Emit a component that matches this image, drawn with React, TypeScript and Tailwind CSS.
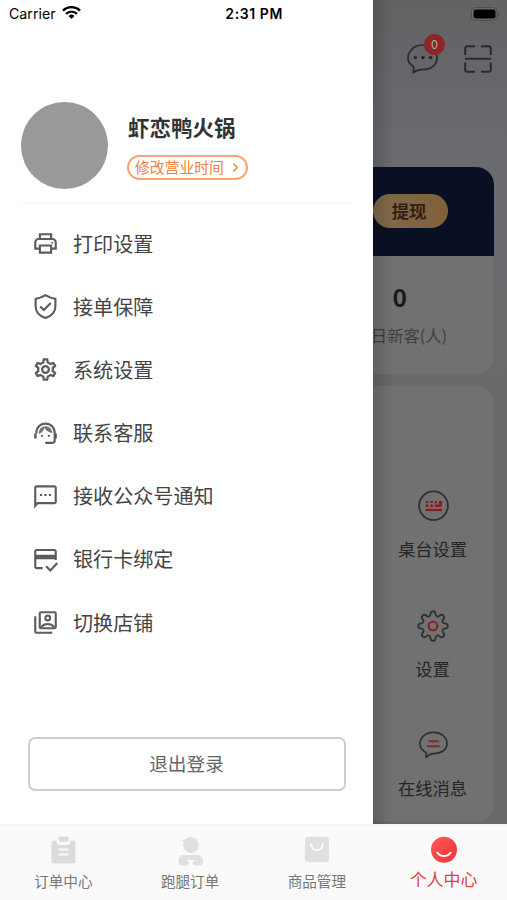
import type { ReactNode } from 'react'

const iconProps = {
  viewBox: '0 0 24 24',
  fill: 'none',
  stroke: 'currentColor',
  strokeWidth: 1.9,
}

function PrintIcon() {
  return (
    <svg {...iconProps} className="size-[27px]">
      <path d="M7 8V3.800h10V8M7 16.500H2.900V11a3 3 0 0 1 3-3h12.200a3 3 0 0 1 3 3v5.500H17" />
      <path d="M7 13.800h10v6.300H7z" />
      <circle cx="18" cy="11.300" r=".9" fill="currentColor" stroke="none" />
    </svg>
  )
}

function ShieldIcon() {
  return (
    <svg {...iconProps} className="size-[27px]">
      <path d="M12 1.900c2.700 1.700 5.500 2.800 8.800 3.300v6.300c0 5.300-3.600 9-8.800 10.700-5.200-1.700-8.800-5.400-8.800-10.700V5.200C6.500 4.700 9.300 3.600 12 1.900z" strokeLinejoin="round" />
      <path d="M7.300 12l3.200 3.100 6.200-6.300" />
    </svg>
  )
}

function GearIcon() {
  return (
    <svg viewBox="0 0 24 24" fill="currentColor" className="size-[27px]">
      <path d="M19.430 12.980c.04-.32.07-.64.07-.98s-.03-.66-.07-.98l2.110-1.650c.19-.15.24-.42.120-.64l-2-3.460c-.09-.16-.26-.25-.44-.25-.06 0-.12.010-.17.030l-2.490 1c-.52-.4-1.080-.73-1.690-.98l-.38-2.650C14.460 2.180 14.250 2 14 2h-4c-.25 0-.46.180-.49.420l-.38 2.650c-.61.250-1.170.590-1.690.980l-2.490-1c-.06-.02-.12-.03-.18-.03-.17 0-.34.090-.43.250l-2 3.460c-.13.220-.07.490.120.640l2.110 1.650c-.04.320-.07.650-.07.980s.03.660.070.980l-2.110 1.650c-.19.150-.24.420-.12.640l2 3.460c.09.160.260.250.440.250.06 0 .12-.01.170-.03l2.490-1c.52.400 1.080.730 1.690.980l.38 2.650c.03.240.240.420.490.420h4c.25 0 .46-.18.490-.42l.38-2.650c.61-.25 1.170-.59 1.690-.98l2.490 1c.06.020.12.030.180.030.17 0 .34-.09.430-.25l2-3.460c.12-.22.070-.49-.12-.64l-2.110-1.650zm-1.980-1.710c.04.310.050.520.050.730 0 .21-.02.430-.05.730l-.14 1.130.89.700 1.080.840-.7 1.210-1.270-.51-1.040-.42-.9.680c-.43.320-.84.560-1.250.730l-1.060.430-.16 1.130-.2 1.350h-1.400l-.19-1.350-.16-1.130-1.060-.43c-.43-.18-.83-.41-1.230-.71l-.91-.7-1.060.430-1.270.510-.7-1.210 1.080-.84.890-.7-.14-1.130c-.03-.31-.05-.54-.05-.74s.02-.43.050-.73l.14-1.130-.89-.7-1.080-.84.700-1.210 1.270.510 1.040.420.900-.68c.43-.32.840-.56 1.250-.73l1.060-.43.160-1.130.2-1.350h1.390l.19 1.350.160 1.130 1.060.430c.43.180.830.410 1.230.710l.91.700 1.060-.43 1.270-.51.700 1.210-1.070.850-.89.700.14 1.130zM12 8c-2.210 0-4 1.790-4 4s1.790 4 4 4 4-1.790 4-4-1.790-4-4-4zm0 6c-1.100 0-2-.9-2-2s.9-2 2-2 2 .9 2 2-.9 2-2 2z" />
    </svg>
  )
}

function SupportIcon() {
  return (
    <svg {...iconProps} className="size-[27px]">
      <path d="M3.800 12C3.800 6.800 7.300 3.200 12 3.200S20.200 6.800 20.200 12v6.300a2 2 0 0 1-2 2h-6.400" />
      <path d="M3 12v4.500M21 12v4.500" strokeWidth="2.200" />
      <path d="M6 12.500c2.700-1 4.300-2.700 5-5.300 1.700 2.700 4.200 4.300 7.300 4.400C17.500 7.700 15.300 5.600 12 5.600 8.300 5.600 6 8.300 6 12.500z" fill="currentColor" fillOpacity=".85" stroke="none" />
      <circle cx="9" cy="14" r="1" fill="currentColor" stroke="none" />
      <circle cx="15" cy="14" r="1" fill="currentColor" stroke="none" />
    </svg>
  )
}

function SmsIcon() {
  return (
    <svg {...iconProps} className="size-[27px]">
      <path d="M2.900 20.300V4.400A1.400 1.400 0 0 1 4.300 3h15.400a1.400 1.400 0 0 1 1.400 1.400v12.100a1.400 1.400 0 0 1-1.400 1.400H5z" />
      <path d="M7 10.700h2M11 10.700h2M15 10.700h2" />
    </svg>
  )
}

function CardIcon() {
  return (
    <svg {...iconProps} className="size-[27px]">
      <path d="M9.500 19.700H4.300a1.400 1.400 0 0 1-1.400-1.400V5a1.400 1.400 0 0 1 1.400-1.400h15.400A1.400 1.400 0 0 1 21.100 5v7.400" />
      <path d="M2.900 9.800h18.200" strokeWidth="4" />
      <path d="M12.500 18l3.800 3.700 6.200-6.500" />
    </svg>
  )
}

function SwitchIcon() {
  return (
    <svg {...iconProps} className="size-[27px]">
      <rect x="6.900" y="2.900" width="14.200" height="14.200" rx="1" />
      <path d="M2.900 6.500v13.600a1 1 0 0 0 1 1H18" />
      <circle cx="14" cy="8" r="2.100" />
      <path d="M8.300 16c1.400-1.900 3.200-2.700 5.700-2.700s4.300.8 5.700 2.700" />
    </svg>
  )
}

const menu: { label: string; icon: ReactNode }[] = [
  { label: '打印设置', icon: <PrintIcon /> },
  { label: '接单保障', icon: <ShieldIcon /> },
  { label: '系统设置', icon: <GearIcon /> },
  { label: '联系客服', icon: <SupportIcon /> },
  { label: '接收公众号通知', icon: <SmsIcon /> },
  { label: '银行卡绑定', icon: <CardIcon /> },
  { label: '切换店铺', icon: <SwitchIcon /> },
]

function TableIcon() {
  return (
    <svg viewBox="0 0 32 32" fill="none" className="size-8">
      <circle cx="16.500" cy="15.700" r="14.400" stroke="#303030" strokeWidth="1.800" />
      <g fill="#8f171d">
        <path d="M8.800 11h2.700v2H8.800zM13.300 11H16v2h-2.700zM8.800 14.500h2.700V17H8.800zM13.300 14.500H16V17h-2.700zM17.800 11h2.200v2.500h1.700V11h3.200v4.500L23.500 17h-5.700v-2.500h4v-1h-4z" />
        <path d="M8.500 18.900H25v2.200H8.500z" />
      </g>
    </svg>
  )
}

function CogIcon() {
  return (
    <svg viewBox="0 0 32 32" fill="none" className="size-8">
      <path
        d="M13.400 4.300C13.400.2 18.600.2 18.600 4.300C18.600 6.300 21 7.300 22.400 5.900C25.300 3 29 6.700 26.100 9.600C24.700 11 25.700 13.400 27.700 13.400C31.800 13.400 31.800 18.600 27.700 18.600C25.700 18.600 24.700 21 26.100 22.400C29 25.300 25.300 29 22.400 26.100C21 24.700 18.600 25.700 18.600 27.700C18.600 31.800 13.400 31.800 13.400 27.700C13.400 25.700 11 24.700 9.600 26.100C6.700 29 3 25.300 5.900 22.400C7.300 21 6.300 18.600 4.300 18.600C.2 18.600.2 13.400 4.300 13.400C6.300 13.400 7.300 11 5.900 9.600C3 6.700 6.700 3 9.600 5.900C11 7.300 13.400 6.300 13.400 4.300Z"
        stroke="#303030"
        strokeWidth="1.800"
      />
      <circle cx="16" cy="16" r="4.400" stroke="#8f171d" strokeWidth="1.900" />
    </svg>
  )
}

function OnlineIcon() {
  return (
    <svg viewBox="0 0 32 32" fill="none" className="size-8">
      <path
        d="M9 28.400l.2-4.600C4.900 21.500 3 18.300 3 14.600 3 8.200 8.800 3.400 16.500 3.400S30 8.200 30 14.600s-5.800 10-13.500 10c-3.200 0-5 1.200-7.500 3.800z"
        stroke="#303030"
        strokeWidth="1.700"
        strokeLinejoin="round"
      />
      <path d="M11.700 12.200h10.200M10 17.200h12.800" stroke="#7d2c2f" strokeWidth="2" />
    </svg>
  )
}

const tools = [
  { label: '桌台设置', icon: <TableIcon /> },
  { label: '设置', icon: <CogIcon /> },
  { label: '在线消息', icon: <OnlineIcon /> },
]

function Drawer() {
  return (
    <aside className="flex w-[373px] shrink-0 flex-col bg-white">
      <div className="flex h-[27px] items-center font-['Inter','Noto_Sans_CJK_SC',sans-serif] text-black">
        <span className="w-[61.500px] pl-[9px] text-[14.200px]">Carrier</span>
        <svg viewBox="0 0 20 15" className="h-[15px] w-[19px] -translate-y-px">
          <path d="M1 5.500a13 13 0 0 1 18 0M4.200 8.900a8.400 8.400 0 0 1 11.600 0" fill="none" stroke="black" strokeWidth="2.500" />
          <path d="M10 14.300l-3.100-3.200a4.500 4.500 0 0 1 6.200 0z" />
        </svg>
        <span className="mr-[90px] ml-auto text-[14px] font-semibold tracking-[0.600px]">2:31 PM</span>
      </div>

      <div className="mx-[21px] mt-[75px] flex h-[102px] border-b-2 border-[#fafafa]">
        <div className="size-[87px] rounded-full bg-[#999]" />
        <div className="ml-[19px] flex flex-col items-start pt-[10px]">
          <h1 className="pl-px text-[21.500px] leading-[30px] font-bold text-[#333]">虾恋鸭火锅</h1>
          <button className="mt-[13px] flex h-[25px] w-[121px] items-center rounded-full border-2 border-[#f6a570] pl-[6px] text-[14.800px] leading-none text-[#ef8138]">
            修改营业时间
            <svg viewBox="0 0 8 12" className="ml-[8px] h-[11px] w-[7px]" fill="none" stroke="currentColor" strokeWidth="1.600">
              <path d="M1.500 1.500L6 6l-4.500 4.500" />
            </svg>
          </button>
        </div>
      </div>

      <nav className="mt-[8px]">
        {menu.map((item) => (
          <div key={item.label} className="flex h-[63.200px] items-center pl-8 text-[#5c5c5c]">
            {item.icon}
            <span className="ml-[14px] text-[20.100px] text-[#444]">{item.label}</span>
          </div>
        ))}
      </nav>

      <button className="mt-[83px] ml-[28px] h-[54px] w-[318px] rounded-[7px] border-2 border-[#cdcdcd] pr-px pb-[2px] text-[18.700px] text-[#666]">
        退出登录
      </button>
    </aside>
  )
}

function Backdrop() {
  return (
    <main className="relative flex flex-1 flex-col bg-[#696969] bg-[linear-gradient(180deg,#636365_0px,#66676b_80px,#696b6f_170px,#696a6c_330px,#696969_390px)]">
      <div className="flex h-[27px] items-center justify-end pr-[7px]">
        <svg viewBox="0 0 30 14" className="h-[14px] w-[30px]">
          <rect x="1.500" y=".7" width="25.500" height="12.600" rx="3.500" fill="#707172" stroke="#4b4b4d" strokeWidth="1" />
          <rect x="3.500" y="2.500" width="22" height="9" rx="2" />
          <path d="M28.300 5v4c1.300-.8 1.300-3.200 0-4z" fill="#3f3f41" />
        </svg>
      </div>

      <div className="flex h-[140px] items-start pt-[15px] pl-[33px] text-[#292a2d]">
        <div className="relative">
          <svg viewBox="0 0 32 34" fill="none" className="h-[34px] w-8">
            <path
              d="M7.300 30.700l.4-6C4 22.500 2 19.800 2 16.300 2 9 8.300 3 16.500 3S31 9 31 16c0 7-6.300 11.600-13.500 11.600-4.300-.2-6.500 0-10.200 3.100z"
              stroke="currentColor"
              strokeWidth="1.700"
              strokeLinejoin="round"
            />
            <g fill="currentColor">
              <circle cx="9.300" cy="15.500" r="1.800" />
              <circle cx="17" cy="15.500" r="1.800" />
              <circle cx="24.500" cy="15.500" r="1.800" />
            </g>
          </svg>
          <span className="absolute -top-[8px] left-[18px] flex size-[21px] items-center justify-center rounded-full bg-[#8c2524] text-[12.500px] text-[#aaa]">
            0
          </span>
        </div>
        <svg viewBox="0 0 28 28" fill="none" stroke="currentColor" strokeWidth="2" className="mt-[3px] ml-[25.500px] size-7">
          <path d="M11 1.200H3.500A2.300 2.300 0 0 0 1.200 3.500V10M17 1.200h7.500a2.300 2.300 0 0 1 2.300 2.300V10M1.200 17.500v7a2.300 2.300 0 0 0 2.300 2.300H11M26.800 17.500v7a2.300 2.300 0 0 1-2.300 2.300H17M1 13.800h26" />
        </svg>
      </div>

      <section className="mr-[13px] h-[207px] rounded-r-[18px] bg-[#717171]">
        <div className="flex h-[89px] items-start rounded-tr-[18px] bg-[#0a1024] pt-[27px]">
          <button className="h-[34px] w-[75px] rounded-full bg-linear-to-r from-[#80694e] to-[#806039] pr-[3px] text-[17.300px] leading-[34px] font-bold text-[#302111]">
            提现
          </button>
        </div>
        <div className="flex w-[74px] flex-col items-end pt-[25px] text-[#3f3f3f]">
          <strong className="mr-[40px] text-[24.500px] leading-8 font-bold text-[#1b1b1b]">0</strong>
          <span className="mt-[10px] text-[16.300px] leading-6 whitespace-nowrap">日新客(人)</span>
        </div>
      </section>

      <section className="mt-3 mr-[13px] h-[435px] rounded-r-[16px] bg-[#717171] pt-[104px]">
        {tools.map((tool) => (
          <div key={tool.label} className="flex h-[119.500px] flex-col items-center pr-[2px] text-[17.300px] text-[#252525]">
            {tool.icon}
            <span className="mt-[15px] leading-6">{tool.label}</span>
          </div>
        ))}
      </section>

      {/* drawer shadow */}
      <div className="absolute inset-y-0 left-0 w-5 bg-linear-to-r from-black/15 to-transparent" />
    </main>
  )
}

function TabBar() {
  return (
    <footer className="grid h-[76px] grid-cols-4 border-t border-[#f5f5f5] bg-[#fafafa] pt-[10px] text-[14.600px] text-[#777]">
      <div className="flex flex-col items-center">
        <svg viewBox="0 0 30 32" className="h-8 w-[30px] translate-x-[0.500px]">
          <path d="M5.500 5.500H8c0 3.300 1.200 4.500 3.500 4.500h7c2.300 0 3.500-1.200 3.500-4.500h2.500a2.500 2.500 0 0 1 2.500 2.500v18a2.500 2.500 0 0 1-2.500 2.500h-19A2.500 2.500 0 0 1 3 26V8a2.500 2.500 0 0 1 2.500-2.500z" fill="#dcdcdc" />
          <path d="M10 1.500h10V5l-1.500 2h-7L10 5z" fill="#dcdcdc" />
          <path d="M10 14.500h10M10 19.500h10" stroke="#fafafa" strokeWidth="1.800" />
        </svg>
        <span className="mt-[3px]">订单中心</span>
      </div>
      <div className="flex flex-col items-center">
        <svg viewBox="0 0 30 32" fill="#e0e0e0" className="h-8 w-[30px] translate-x-[0.500px]">
          <circle cx="15.500" cy="10" r="7.900" />
          <path d="M5.200 4.800c2.300.8 4.300.2 6.300-1L9 10c-.3-2.300-1.500-3.800-3.800-5.200z" />
          <path d="M7.500 20h15.500c2.700 0 4.500 3 4.500 6.500 0 2.500-1.200 4-3 4h-6.500l-1-3.300 3-2.200h-9.500l3 2.200-1 3.300H6c-2 0-3-1.500-3-4C3 23 4.800 20 7.500 20z" />
        </svg>
        <span className="mt-[3px]">跑腿订单</span>
      </div>
      <div className="flex flex-col items-center">
        <svg viewBox="0 0 30 32" className="h-8 w-[30px]">
          <path d="M6.500 1.800h17A3.500 3.500 0 0 1 27 5.300l.2 18.500a3.500 3.500 0 0 1-3.500 3.500H6.300a3.500 3.500 0 0 1-3.500-3.500L3 5.300a3.500 3.500 0 0 1 3.500-3.500z" fill="#e0e0e0" />
          <path d="M9 9c.5 4 2.500 6.200 6 6.200S20.500 13 21 9" fill="none" stroke="#fafafa" strokeWidth="1.900" strokeLinecap="round" />
        </svg>
        <span className="mt-[3px]">商品管理</span>
      </div>
      <div className="flex flex-col items-center text-[17px] text-[#e33e3e]">
        <svg viewBox="0 0 30 30" className="h-[30px] w-[30px]">
          <defs>
            <linearGradient id="face" x1="0" y1="0" x2="1" y2="1">
              <stop stopColor="#ff5b58" />
              <stop offset="1" stopColor="#ef3236" />
            </linearGradient>
          </defs>
          <circle cx="15" cy="14.800" r="13" fill="url(#face)" />
          <path d="M8.500 17.700c3 4.500 10 4.500 13 0" fill="none" stroke="white" strokeWidth="2" strokeLinecap="round" />
        </svg>
        <span className="leading-[28px]">个人中心</span>
      </div>
    </footer>
  )
}

export default function App() {
  return (
    <div className="h-[900px] w-[507px] overflow-hidden font-['Noto_Sans_CJK_SC',sans-serif]">
      <div className="flex h-[824px]">
        <Drawer />
        <Backdrop />
      </div>
      <TabBar />
    </div>
  )
}
